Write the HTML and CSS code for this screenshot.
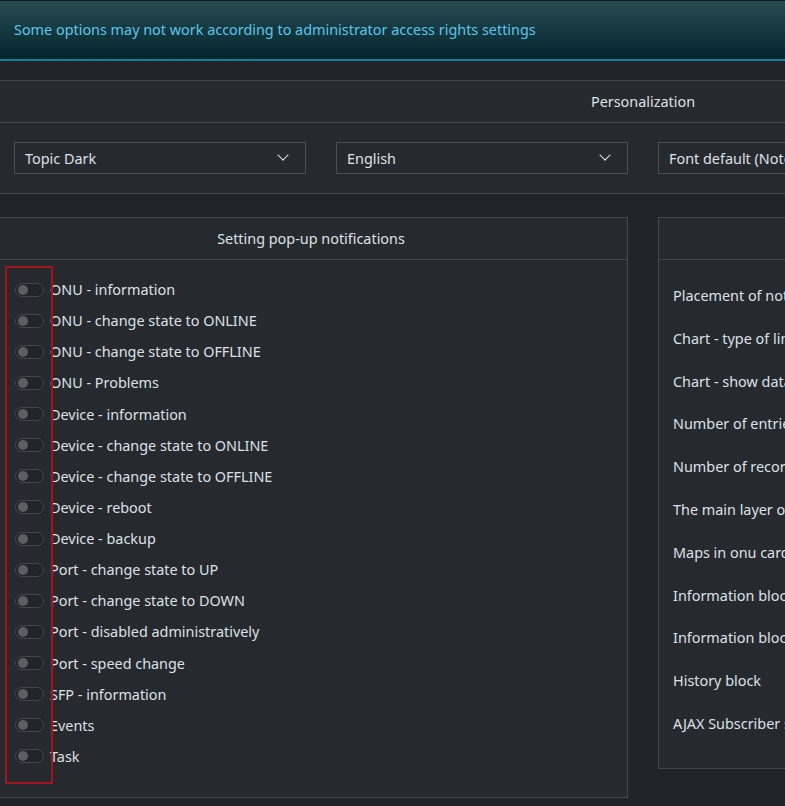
FILE: index.html
```html
<!DOCTYPE html>
<html lang="en">
<head>
    <meta charset="UTF-8">
    <meta name="viewport" content="width=device-width, initial-scale=1.0">
    <title>Settings</title>
    <link rel="stylesheet" href="styles.css">
</head>
<body>

    <div class="notice">Some options may not work according to administrator access rights settings</div>

    <div class="page">
        <div class="card">
            <div class="card-head">Personalization</div>
            <div class="selects">
                <div class="select">Topic Dark <span class="chev"></span></div>
                <div class="select">English <span class="chev"></span></div>
                <div class="select">Font default (Noto Sans) <span class="chev"></span></div>
                <div class="select">Default <span class="chev"></span></div>
            </div>
        </div>

        <div class="columns">
            <div class="card">
                <div class="card-head">Setting pop-up notifications</div>
                <div class="toggles">
                    <div class="mark"></div>
                    <label class="row"><span class="switch"></span>ONU - information</label>
                    <label class="row"><span class="switch"></span>ONU - change state to ONLINE</label>
                    <label class="row"><span class="switch"></span>ONU - change state to OFFLINE</label>
                    <label class="row"><span class="switch"></span>ONU - Problems</label>
                    <label class="row"><span class="switch"></span>Device - information</label>
                    <label class="row"><span class="switch"></span>Device - change state to ONLINE</label>
                    <label class="row"><span class="switch"></span>Device - change state to OFFLINE</label>
                    <label class="row"><span class="switch"></span>Device - reboot</label>
                    <label class="row"><span class="switch"></span>Device - backup</label>
                    <label class="row"><span class="switch"></span>Port - change state to UP</label>
                    <label class="row"><span class="switch"></span>Port - change state to DOWN</label>
                    <label class="row"><span class="switch"></span>Port - disabled administratively</label>
                    <label class="row"><span class="switch"></span>Port - speed change</label>
                    <label class="row"><span class="switch"></span>SFP - information</label>
                    <label class="row"><span class="switch"></span>Events</label>
                    <label class="row"><span class="switch"></span>Task</label>
                </div>
            </div>

            <div class="card">
                <div class="card-head">Interface settings</div>
                <div class="options">
                    <div class="opt">Placement of notifications</div>
                    <div class="opt">Chart - type of line</div>
                    <div class="opt">Chart - show data points</div>
                    <div class="opt">Number of entries per page</div>
                    <div class="opt">Number of records in history</div>
                    <div class="opt">The main layer of the map</div>
                    <div class="opt">Maps in onu card</div>
                    <div class="opt">Information block on the left</div>
                    <div class="opt">Information block on the right</div>
                    <div class="opt">History block</div>
                    <div class="opt">AJAX Subscriber search</div>
                </div>
            </div>
        </div>
    </div>

</body>
</html>
```

FILE: styles.css
```css
body {
    font-family: 'Noto Sans', sans-serif;
    font-size: 14.4px;
    background: #212328;
    color: #dde1e6;
    margin: 0;
    overflow: hidden;
}
.notice {
    height: 58px;
    line-height: 58px;
    padding-left: 14px;
    color: #5cc6ea;
    background: linear-gradient(#284a51, #03252f);
    border-top: 1px solid #14171a;
    border-bottom: 2px solid #0e7f95;
    white-space: nowrap;
}
.page {
    width: 1298px;
    margin-left: -6px;
    padding-top: 19px;
}
.card {
    background: #26292e;
    border: 1px solid #44474c;
}
.card-head {
    height: 41px;
    line-height: 41px;
    text-align: center;
    border-bottom: 1px solid #44474c;
    white-space: nowrap;
    overflow: hidden;
}
.selects {
    display: grid;
    grid-template-columns: repeat(4, 1fr);
    gap: 30px;
    padding: 19px;
    height: 32px;
}
.select {
    position: relative;
    height: 30px;
    line-height: 31px;
    padding-left: 10px;
    border: 1px solid #4a4d52;
    white-space: nowrap;
    overflow: hidden;
}
.chev {
    position: absolute;
    right: 18px;
    top: 8px;
    width: 7px;
    height: 7px;
    border-right: 1.6px solid #dde1e6;
    border-bottom: 1.6px solid #dde1e6;
    transform: rotate(45deg);
}
.columns {
    display: grid;
    grid-template-columns: 1fr 1fr;
    gap: 30px;
    align-items: start;
    margin-top: 23px;
}
.toggles {
    position: relative;
    padding: 14px 20px 25px;
}
.row {
    display: flex;
    align-items: center;
    height: 31.13px;
    gap: 6px;
}
.switch {
    position: relative;
    width: 27px;
    height: 12px;
    border: 1px solid #43464a;
    border-radius: 8px;
    background: #222428;
}
.switch::after {
    content: "";
    position: absolute;
    left: 2px;
    top: 1px;
    width: 10px;
    height: 10px;
    border-radius: 50%;
    background: #5b5e62;
}
.mark {
    position: absolute;
    left: 10px;
    top: 6px;
    width: 44px;
    height: 514px;
    border: 2px solid #a3141c;
}
.options {
    padding: 15px 14px 22px;
}
.opt {
    height: 42.8px;
    line-height: 42.8px;
    white-space: nowrap;
}
```
